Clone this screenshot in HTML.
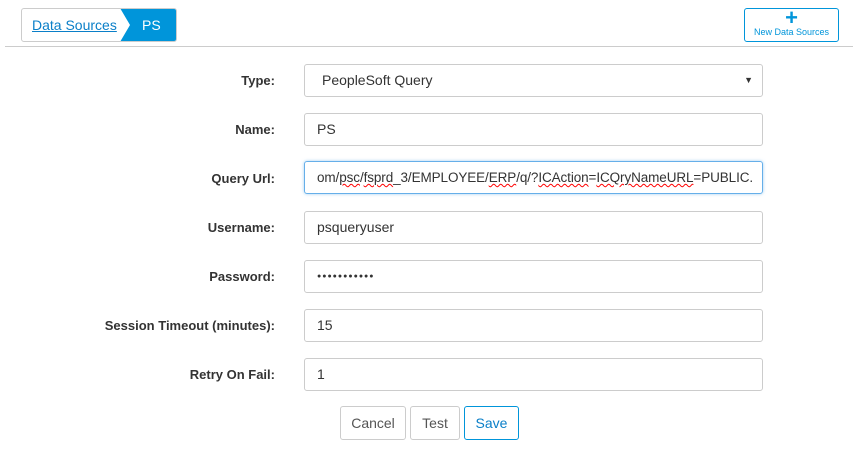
<!DOCTYPE html>
<html><head><meta charset="utf-8"><style>
*{box-sizing:border-box}
body{margin:0;width:858px;height:451px;background:#fff;font-family:"Liberation Sans",sans-serif;color:#333;position:relative;overflow:hidden}
.abs{position:absolute}
.bc{left:21px;top:8px;width:156px;height:34px;border:1px solid #ccc;border-radius:3px;overflow:hidden}
.bc a{position:absolute;left:10px;top:8px;font-size:14px;color:#0a7fc8;text-decoration:underline}
.ps{position:absolute;left:98px;top:-1px;width:58px;height:34px;background:#0095da;color:#fff;font-size:14px;line-height:34px;padding-left:22px;clip-path:polygon(0 0,100% 0,100% 100%,0 100%,10px 50%)}
.line{left:5px;top:46px;width:848px;height:1px;background:#ccc}
.nb{left:744px;top:8px;width:95px;height:34px;border:1px solid #0095da;border-radius:3px;text-align:center;color:#0095da}
.nb .p{font-size:22px;font-weight:bold;line-height:16px;margin-top:1px}
.nb .t{font-size:9px;margin-top:1px}
.lab{right:583px;width:260px;text-align:right;font-size:13px;font-weight:bold;line-height:33px}
.inp{left:304px;width:459px;height:33px;border:1px solid #ccc;border-radius:3px;font-size:14px;line-height:31px;padding-left:12px;white-space:nowrap;overflow:hidden}
.btn{top:406px;height:34px;border:1px solid #ccc;border-radius:3px;font-size:14px;line-height:32px;text-align:center;color:#555}
.sq{text-decoration:underline wavy red;text-decoration-thickness:1px}
</style></head><body>
<div class="abs bc"><a>Data Sources</a><div class="ps">PS</div></div>
<div class="abs nb"><div class="p">+</div><div class="t">New Data Sources</div></div>
<div class="abs line"></div>

<div class="abs lab" style="top:64px">Type:</div>
<div class="abs inp" style="top:64px;padding-left:17px">PeopleSoft Query<span style="position:absolute;right:9px;font-size:9px">▼</span></div>
<div class="abs lab" style="top:113px">Name:</div>
<div class="abs inp" style="top:113px">PS</div>
<div class="abs lab" style="top:162px">Query Url:</div>
<div class="abs inp" style="top:161px;border-color:#66afe9;box-shadow:0 0 3px rgba(102,175,233,.6);padding-left:12px;font-size:13.5px;letter-spacing:-0.1px">om/<span class="sq">psc</span>/<span class="sq">fsprd</span>_3/EMPLOYEE/<span class="sq">ERP</span>/q/?<span class="sq">ICAction</span>=<span class="sq">ICQryNameURL</span>=PUBLIC.</div>
<div class="abs lab" style="top:211px">Username:</div>
<div class="abs inp" style="top:211px">psqueryuser</div>
<div class="abs lab" style="top:260px">Password:</div>
<div class="abs inp" style="top:260px;font-size:7px;letter-spacing:1px">●●●●●●●●●●●</div>
<div class="abs lab" style="top:309px">Session Timeout (minutes):</div>
<div class="abs inp" style="top:309px">15</div>
<div class="abs lab" style="top:358px">Retry On Fail:</div>
<div class="abs inp" style="top:358px">1</div>

<div class="abs btn" style="left:340px;width:66px">Cancel</div>
<div class="abs btn" style="left:410px;width:50px">Test</div>
<div class="abs btn" style="left:464px;width:55px;border-color:#0095da;color:#0a7fc8">Save</div>
</body></html>
